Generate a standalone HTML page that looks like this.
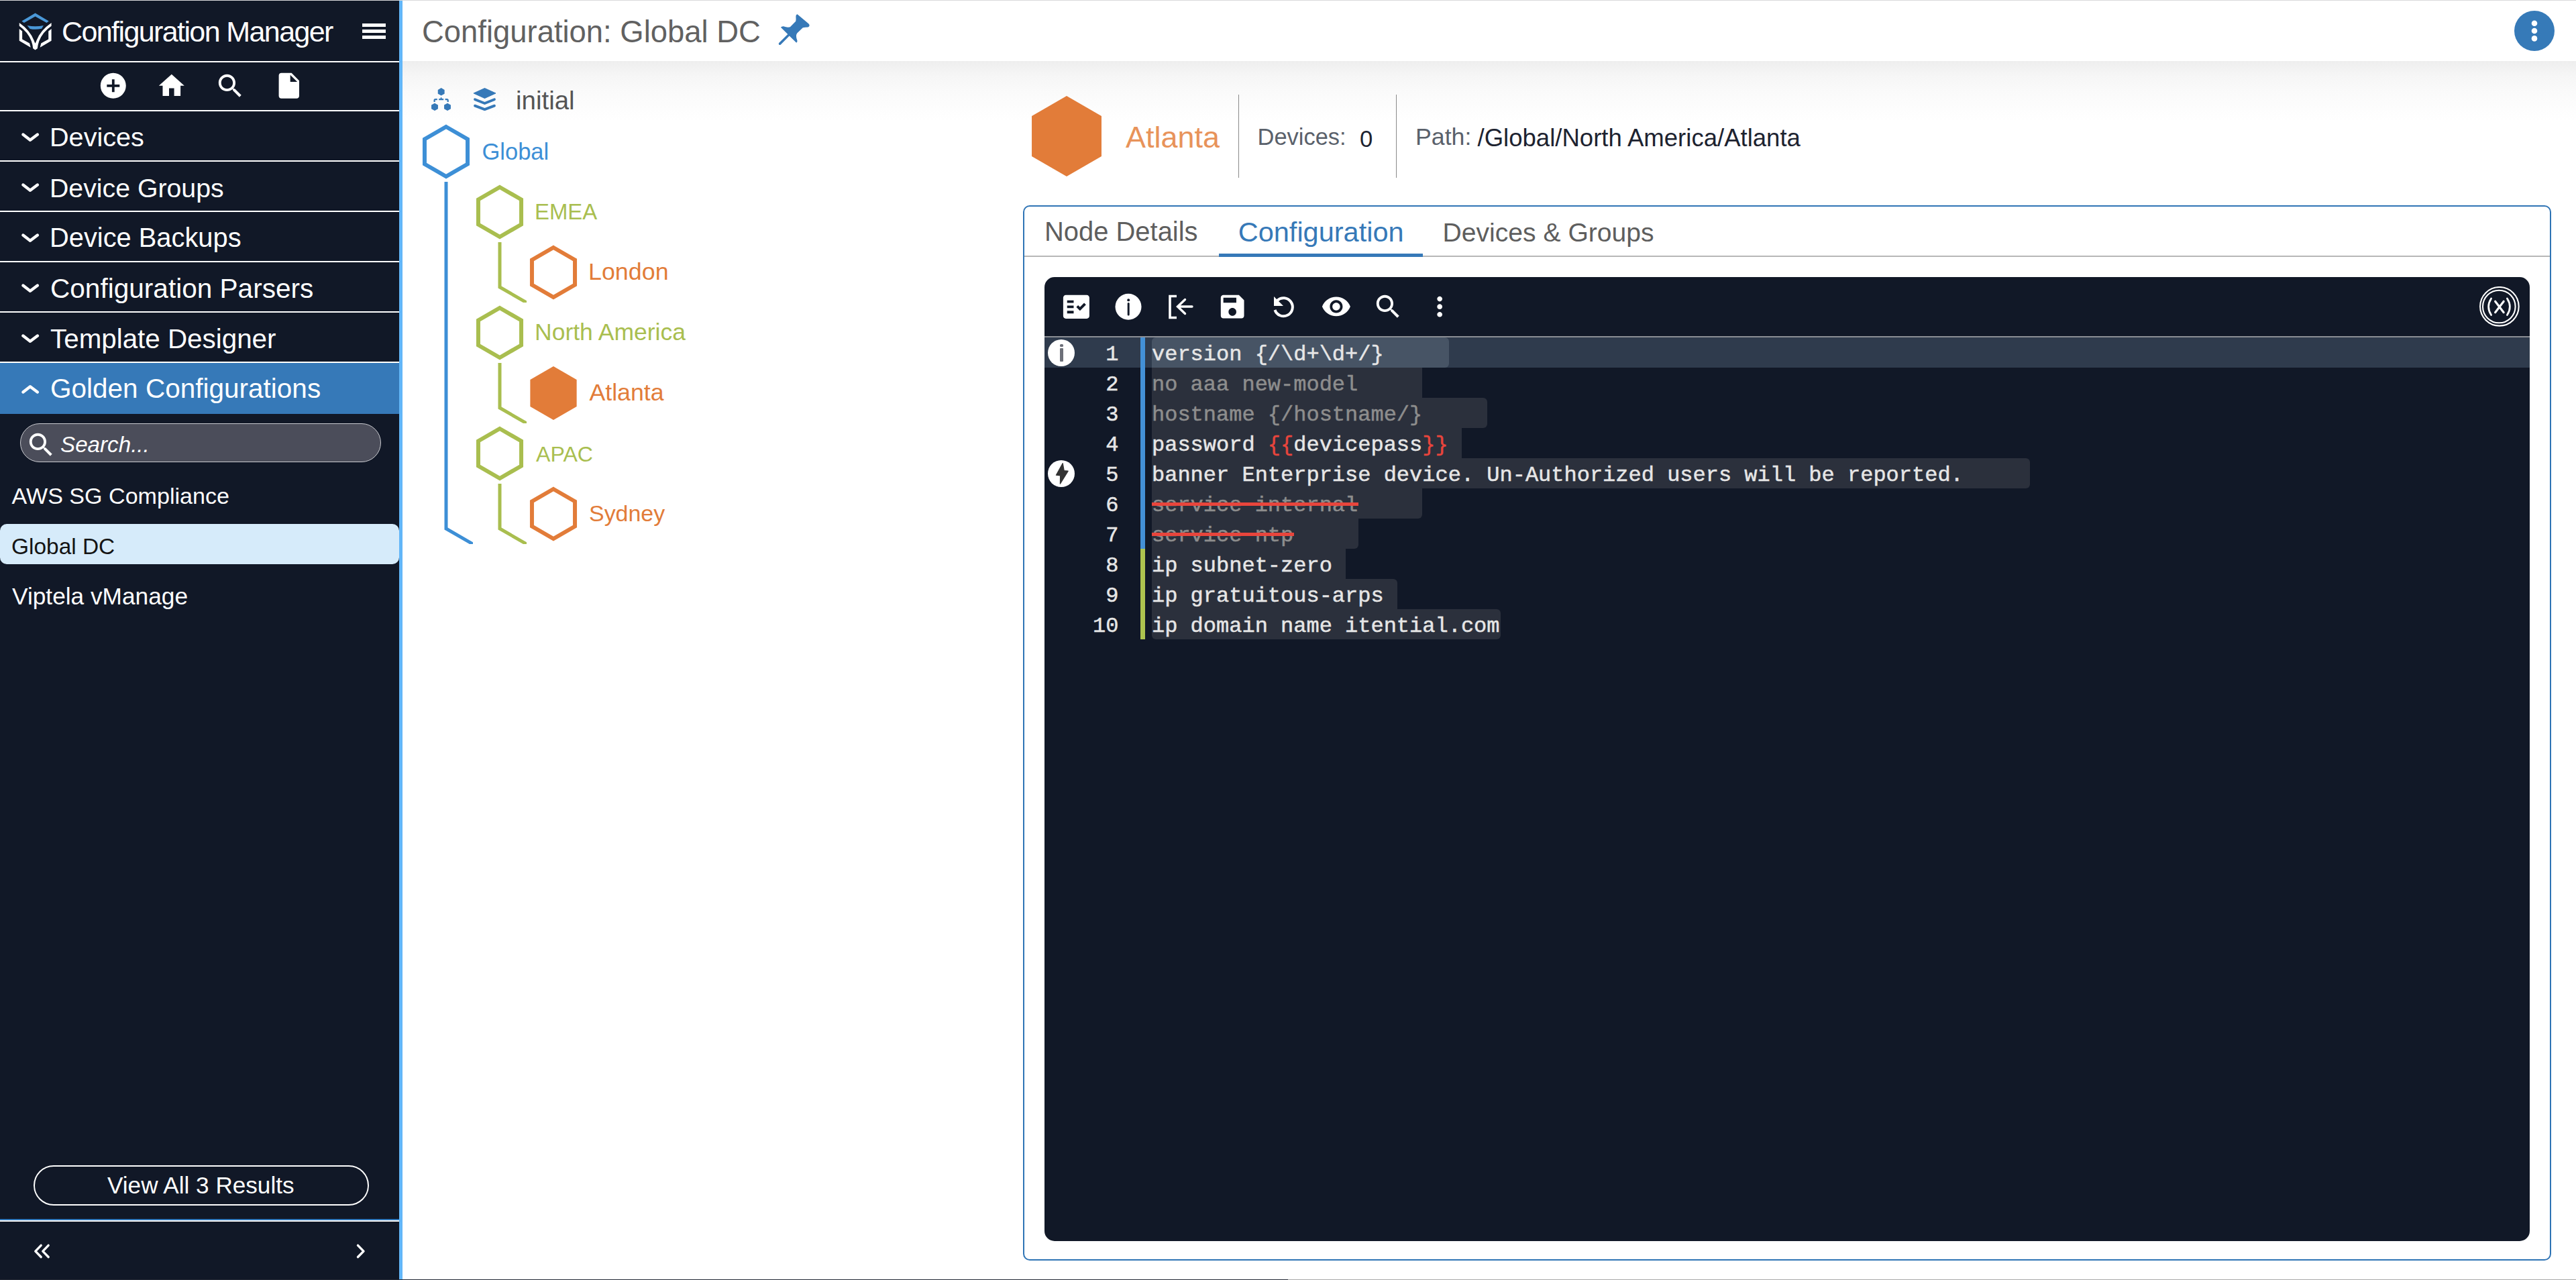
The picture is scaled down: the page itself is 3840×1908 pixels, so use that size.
<!DOCTYPE html>
<html><head><meta charset="utf-8"><style>
html,body{margin:0;padding:0;width:3840px;height:1908px;overflow:hidden;background:#fff;}
body{position:relative;font-family:'Liberation Sans', sans-serif;}
.t{position:absolute;white-space:nowrap;}
.r{position:absolute;}
</style></head><body>
<div class="r" style="left:0px;top:0px;width:3840px;height:1px;background:#d9d9db;"></div>
<div class="r" style="left:0px;top:1px;width:595px;height:1907px;background:#111827;"></div>
<div class="r" style="left:595px;top:1px;width:5px;height:1907px;background:#62b6f8;"></div>
<svg class="r" style="left:20px;top:12px;" width="70" height="70" viewBox="0 0 1280 1280">
<path d="M225 355 L595 135 L965 355 L905 400 L595 230 L290 400 Z" fill="#4a98d8"/>
<path d="M375 475 Q595 520 820 475 L770 560 Q595 600 450 565 Z" fill="#4a98d8"/>
<path d="M160 400 Q450 600 560 880 Q590 960 595 960 Q600 960 630 880 Q740 600 1035 400 L1035 490 Q800 650 700 900 Q660 1020 655 1100 L595 1145 L535 1100 Q530 1020 490 900 Q390 650 160 490 Z" fill="#fff"/>
<path d="M160 565 L240 630 L240 850 L440 960 L470 1075 L160 890 Z" fill="#fff"/>
<path d="M1035 565 L955 630 L955 850 L755 960 L725 1075 L1035 890 Z" fill="#fff"/>
</svg>
<div class="t" style="left:92px;top:25.89px;font-size:43px;line-height:43px;color:#fff;letter-spacing:-1.6px;">Configuration Manager</div>
<div class="r" style="left:540px;top:35px;width:35px;height:4.5px;background:#fff;"></div>
<div class="r" style="left:540px;top:44px;width:35px;height:4.5px;background:#fff;"></div>
<div class="r" style="left:540px;top:53px;width:35px;height:4.5px;background:#fff;"></div>
<div class="r" style="left:0px;top:91px;width:595px;height:2px;background:#fff;"></div>
<svg class="r" style="left:146.2px;top:105.2px;" width="45.6" height="45.6" viewBox="0 0 24 24"><path d="M12 2C6.48 2 2 6.48 2 12s4.48 10 10 10 10-4.48 10-10S17.52 2 12 2zm5 11h-4v4h-2v-4H7v-2h4V7h2v4h4v2z" fill="#fff" /></svg>
<svg class="r" style="left:233.2px;top:105.2px;" width="45.6" height="45.6" viewBox="0 0 24 24"><path d="M10 20v-6h4v6h5v-8h3L12 3 2 12h3v8z" fill="#fff" /></svg>
<svg class="r" style="left:320.3px;top:105.2px;" width="46.56" height="46.56" viewBox="0 0 24 24"><path d="M15.5 14h-.79l-.28-.27C15.41 12.59 16 11.11 16 9.5 16 5.91 13.09 3 9.5 3S3 5.91 3 9.5 5.91 16 9.5 16c1.61 0 3.09-.59 4.23-1.57l.27.28v.79l5 4.99L20.49 19l-4.99-5zm-6 0C7.01 14 5 11.99 5 9.5S7.01 5 9.5 5 14 7.01 14 9.5 11.99 14 9.5 14z" fill="#fff" /></svg>
<svg class="r" style="left:408.2px;top:105.2px;" width="45.6" height="45.6" viewBox="0 0 24 24"><path d="M6 2c-1.1 0-1.99.9-1.99 2L4 20c0 1.1.89 2 1.99 2H18c1.1 0 2-.9 2-2V8l-6-6H6zm7 7V3.5L18.5 9H13z" fill="#fff" /></svg>
<div class="r" style="left:0px;top:164px;width:595px;height:2px;background:#fff;"></div>
<div class="t" style="left:74px;top:185.45px;font-size:39.62px;line-height:39.62px;color:#fff;">Devices</div>
<svg class="r" style="left:30px;top:193px;" width="30" height="22" viewBox="0 0 30 22"><path d="M4.4 7.6 L15 15.75 L25.9 7.6" stroke="#fff" stroke-width="4.4" fill="none" stroke-linecap="round" stroke-linejoin="round"/></svg>
<div class="r" style="left:0px;top:239px;width:595px;height:2px;background:#fff;"></div>
<div class="t" style="left:74px;top:260.76px;font-size:39.26px;line-height:39.26px;color:#fff;">Device Groups</div>
<svg class="r" style="left:30px;top:268px;" width="30" height="22" viewBox="0 0 30 22"><path d="M4.4 7.6 L15 15.75 L25.9 7.6" stroke="#fff" stroke-width="4.4" fill="none" stroke-linecap="round" stroke-linejoin="round"/></svg>
<div class="r" style="left:0px;top:314px;width:595px;height:2px;background:#fff;"></div>
<div class="t" style="left:74px;top:335.27px;font-size:39.84px;line-height:39.84px;color:#fff;">Device Backups</div>
<svg class="r" style="left:30px;top:343px;" width="30" height="22" viewBox="0 0 30 22"><path d="M4.4 7.6 L15 15.75 L25.9 7.6" stroke="#fff" stroke-width="4.4" fill="none" stroke-linecap="round" stroke-linejoin="round"/></svg>
<div class="r" style="left:0px;top:389px;width:595px;height:2px;background:#fff;"></div>
<div class="t" style="left:75px;top:409.65px;font-size:40.57px;line-height:40.57px;color:#fff;">Configuration Parsers</div>
<svg class="r" style="left:30px;top:418px;" width="30" height="22" viewBox="0 0 30 22"><path d="M4.4 7.6 L15 15.75 L25.9 7.6" stroke="#fff" stroke-width="4.4" fill="none" stroke-linecap="round" stroke-linejoin="round"/></svg>
<div class="r" style="left:0px;top:464px;width:595px;height:2px;background:#fff;"></div>
<div class="t" style="left:75px;top:484.83px;font-size:40.36px;line-height:40.36px;color:#fff;">Template Designer</div>
<svg class="r" style="left:30px;top:493px;" width="30" height="22" viewBox="0 0 30 22"><path d="M4.4 7.6 L15 15.75 L25.9 7.6" stroke="#fff" stroke-width="4.4" fill="none" stroke-linecap="round" stroke-linejoin="round"/></svg>
<div class="r" style="left:0px;top:539px;width:595px;height:2px;background:#fff;"></div>
<div class="r" style="left:0px;top:541px;width:595px;height:76px;background:#3679b8;"></div>
<div class="t" style="left:75px;top:559.18px;font-size:40.53px;line-height:40.53px;color:#fff;">Golden Configurations</div>
<svg class="r" style="left:30px;top:568px;" width="30" height="22" viewBox="0 0 30 22"><path d="M4.4 16.4 L15 8.25 L25.9 16.4" stroke="#fff" stroke-width="4.4" fill="none" stroke-linecap="round" stroke-linejoin="round"/></svg>
<div class="r" style="left:30px;top:631px;width:536px;height:56px;border:1.5px solid #c9cacf;border-radius:32px;background:#4b4d5a"></div>
<svg class="r" style="left:37.5px;top:639.5px;" width="46.56" height="46.56" viewBox="0 0 24 24"><path d="M15.5 14h-.79l-.28-.27C15.41 12.59 16 11.11 16 9.5 16 5.91 13.09 3 9.5 3S3 5.91 3 9.5 5.91 16 9.5 16c1.61 0 3.09-.59 4.23-1.57l.27.28v.79l5 4.99L20.49 19l-4.99-5zm-6 0C7.01 14 5 11.99 5 9.5S7.01 5 9.5 5 14 7.01 14 9.5 11.99 14 9.5 14z" fill="#fff" /></svg>
<div class="t" style="left:90px;top:645.89px;font-size:33.2px;line-height:33.2px;color:#fff;font-style:italic;">Search...</div>
<div class="t" style="left:17.5px;top:721.64px;font-size:34.09px;line-height:34.09px;color:#fff;">AWS SG Compliance</div>
<div class="r" style="left:0px;top:781px;width:595px;height:60px;background:#d6ebfa;border-radius:10px;"></div>
<div class="t" style="left:17px;top:798.18px;font-size:33.45px;line-height:33.45px;color:#141414;">Global DC</div>
<div class="t" style="left:18px;top:871.13px;font-size:35.28px;line-height:35.28px;color:#fff;">Viptela vManage</div>
<div class="r" style="left:50px;top:1737px;width:496px;height:56px;border:2px solid #fff;border-radius:30px;"></div>
<div class="t" style="left:160px;top:1749.26px;font-size:35.13px;line-height:35.13px;color:#fff;">View All 3 Results</div>
<div class="r" style="left:0px;top:1817px;width:595px;height:2px;background:#3079bd;"></div>
<div class="r" style="left:0px;top:1819px;width:595px;height:2px;background:#fff;"></div>
<svg class="r" style="left:48px;top:1853px;" width="30" height="30" viewBox="0 0 30 30"><path d="M13.2 3.4 L4.8 12.1 L13.2 20.8 M24.2 3.4 L15.8 12.1 L24.2 20.8" stroke="#fff" stroke-width="3.4" fill="none" stroke-linecap="round" stroke-linejoin="round"/></svg>
<svg class="r" style="left:526px;top:1853px;" width="24" height="30" viewBox="0 0 24 30"><path d="M7.5 3.4 L16 12.1 L7.5 20.8" stroke="#fff" stroke-width="3.4" fill="none" stroke-linecap="round" stroke-linejoin="round"/></svg>
<div class="r" style="left:600px;top:91px;width:3240px;height:90px;background:linear-gradient(#eeeeee,#f6f6f6 25%,#fafafa 50%,#fdfdfd 80%,#fff)"></div>
<div class="t" style="left:629px;top:24.54px;font-size:45.42px;line-height:45.42px;color:#616161;">Configuration: Global DC</div>
<svg class="r" style="left:1150px;top:12px;" width="70" height="70" viewBox="0 0 70 70"><path d="M38.6 9.2 L55.3 23.3 Q58.3 26.6 54.6 28.6 Q50 28.8 46.8 29.2 L38.2 37.6 Q35.6 41.5 38.4 48.2 Q39.2 50.6 37.2 51.8 L26.7 41.5 L13.8 54.4 Q12.4 55.6 11.2 54.4 Q10 53 11.4 51.8 L24.3 39 L13.9 28.8 Q15.4 27 18 27.3 Q24 29.4 27.8 28.2 L36.2 19.8 Q36.8 17 36.4 13.6 Q36.2 9.6 38.6 9.2 Z" fill="#3679b8"/></svg>
<div class="r" style="left:3748px;top:16px;width:60px;height:60px;border-radius:50%;background:#367ab8"></div>
<svg class="r" style="left:3758px;top:26px;" width="40" height="40" viewBox="0 0 40 40"><circle cx="20" cy="8.8" r="4.3" fill="#fff"/><circle cx="20" cy="20" r="4.3" fill="#fff"/><circle cx="20" cy="31.4" r="4.3" fill="#fff"/></svg>
<svg class="r" style="left:636px;top:126px;" width="40" height="44" viewBox="0 0 40 44"><path d="M21.70,5.10 L26.64,7.95 L26.64,13.65 L21.70,16.50 L16.76,13.65 L16.76,7.95 Z M12.00,27.70 L16.94,30.55 L16.94,36.25 L12.00,39.10 L7.06,36.25 L7.06,30.55 Z M31.00,27.70 L35.94,30.55 L35.94,36.25 L31.00,39.10 L26.06,36.25 L26.06,30.55 Z" fill="#3679b8"/><path d="M11.600000000000023 26 V23.5 Q11.600000000000023 22.099999999999994 13 22.099999999999994 H15.799999999999955 M18.200000000000045 22.099999999999994 H25.200000000000045 M27.600000000000023 22.099999999999994 H30.299999999999955 Q31.700000000000045 22.099999999999994 31.700000000000045 23.5 V26" stroke="#3679b8" stroke-width="2.2" fill="none"/><path d="M21.600000000000023 18.599999999999994 L23.399999999999977 22 L19.799999999999955 22 Z" fill="#3679b8"/></svg>
<svg class="r" style="left:700px;top:126px;" width="44" height="44" viewBox="0 0 44 44"><path d="M22.5 5.5 L39 13 L22.5 20.5 L6 13 Z" fill="#3679b8" stroke="#3679b8" stroke-width="1" stroke-linejoin="round"/><path d="M8 22.30000000000001 L22.5 28 L37 22.30000000000001" stroke="#3679b8" stroke-width="3.8" fill="none" stroke-linecap="round" stroke-linejoin="round"/><path d="M8 31.599999999999994 L22.5 37.099999999999994 L37 31.599999999999994" stroke="#3679b8" stroke-width="3.8" fill="none" stroke-linecap="round" stroke-linejoin="round"/></svg>
<div class="t" style="left:769px;top:130.94px;font-size:38.45px;line-height:38.45px;color:#555;">initial</div>
<svg class="r" style="left:600px;top:160px;" width="500" height="700" viewBox="0 0 500 700"><path d="M65.00,29.00 L97.04,47.50 L97.04,84.50 L65.00,103.00 L32.96,84.50 L32.96,47.50 Z" fill="none" stroke="#3d8fd6" stroke-width="6"/><path d="M145.00,119.00 L177.04,137.50 L177.04,174.50 L145.00,193.00 L112.96,174.50 L112.96,137.50 Z" fill="none" stroke="#a9be4f" stroke-width="6"/><path d="M225.00,209.00 L257.04,227.50 L257.04,264.50 L225.00,283.00 L192.96,264.50 L192.96,227.50 Z" fill="none" stroke="#e27c39" stroke-width="6"/><path d="M145.00,299.00 L177.04,317.50 L177.04,354.50 L145.00,373.00 L112.96,354.50 L112.96,317.50 Z" fill="none" stroke="#a9be4f" stroke-width="6"/><path d="M225.00,386.00 L259.64,406.00 L259.64,446.00 L225.00,466.00 L190.36,446.00 L190.36,406.00 Z" fill="#e27c39"/><path d="M145.00,479.00 L177.04,497.50 L177.04,534.50 L145.00,553.00 L112.96,534.50 L112.96,497.50 Z" fill="none" stroke="#a9be4f" stroke-width="6"/><path d="M225.00,569.00 L257.04,587.50 L257.04,624.50 L225.00,643.00 L192.96,624.50 L192.96,587.50 Z" fill="none" stroke="#e27c39" stroke-width="6"/><clipPath id="c111"><rect x="55" y="111" width="50" height="540"/></clipPath><path d="M65 111 L65 628 L111 654.5" fill="none" stroke="#3d8fd6" stroke-width="5" stroke-linejoin="miter" clip-path="url(#c111)"/><clipPath id="c201"><rect x="135" y="201" width="50" height="90"/></clipPath><path d="M145 201 L145 268 L191 294.5" fill="none" stroke="#a9be4f" stroke-width="5" stroke-linejoin="miter" clip-path="url(#c201)"/><clipPath id="c381"><rect x="135" y="381" width="50" height="90"/></clipPath><path d="M145 381 L145 448 L191 474.5" fill="none" stroke="#a9be4f" stroke-width="5" stroke-linejoin="miter" clip-path="url(#c381)"/><clipPath id="c561"><rect x="135" y="561" width="50" height="90"/></clipPath><path d="M145 561 L145 628 L191 654.5" fill="none" stroke="#a9be4f" stroke-width="5" stroke-linejoin="miter" clip-path="url(#c561)"/></svg>
<div class="t" style="left:718.5px;top:208.79px;font-size:34.5px;line-height:34.5px;color:#3d8fd6;">Global</div>
<div class="t" style="left:797px;top:300.14px;font-size:32.91px;line-height:32.91px;color:#a9be4f;">EMEA</div>
<div class="t" style="left:877px;top:387.66px;font-size:35.83px;line-height:35.83px;color:#e27c39;">London</div>
<div class="t" style="left:797px;top:477.94px;font-size:35.5px;line-height:35.5px;color:#a9be4f;">North America</div>
<div class="t" style="left:878.4px;top:567.76px;font-size:35.72px;line-height:35.72px;color:#e27c39;">Atlanta</div>
<div class="t" style="left:799px;top:660.80px;font-size:32.12px;line-height:32.12px;color:#a9be4f;">APAC</div>
<div class="t" style="left:878px;top:749.26px;font-size:33.94px;line-height:33.94px;color:#e27c39;">Sydney</div>
<svg class="r" style="left:1530px;top:140px;" width="120" height="130" viewBox="0 0 120 130"><path d="M60.00,3.00 L111.96,33.00 L111.96,93.00 L60.00,123.00 L8.04,93.00 L8.04,33.00 Z" fill="#e27c39"/></svg>
<div class="t" style="left:1678px;top:182.92px;font-size:44.97px;line-height:44.97px;color:#e8935a;">Atlanta</div>
<div class="r" style="left:1846px;top:141px;width:1px;height:124px;background:#8a8a8a;"></div>
<div class="t" style="left:1874.6px;top:186.84px;font-size:34.44px;line-height:34.44px;color:#5a616b;">Devices:</div>
<div class="t" style="left:2027px;top:189.63px;font-size:34.69px;line-height:34.69px;color:#1d2330;">0</div>
<div class="r" style="left:2081px;top:141px;width:1px;height:124px;background:#8a8a8a;"></div>
<div class="t" style="left:2110px;top:186.75px;font-size:35.73px;line-height:35.73px;color:#5a616b;">Path:</div>
<div class="t" style="left:2202.5px;top:188.05px;font-size:36.55px;line-height:36.55px;color:#1d2330;">/Global/North America/Atlanta</div>
<div class="r" style="left:1525px;top:306px;width:2274px;height:1569px;border:2px solid #2f74b5;border-radius:10px;"></div>
<div class="t" style="left:1557px;top:326.18px;font-size:39.94px;line-height:39.94px;color:#5e5e5e;">Node Details</div>
<div class="t" style="left:1845.7px;top:324.85px;font-size:41.52px;line-height:41.52px;color:#3679b8;">Configuration</div>
<div class="t" style="left:2150.5px;top:326.88px;font-size:39.12px;line-height:39.12px;color:#5e5e5e;">Devices &amp; Groups</div>
<div class="r" style="left:1527px;top:381px;width:2274px;height:2px;background:#b7b7b7;"></div>
<div class="r" style="left:1817px;top:378px;width:304px;height:5px;background:#3679b8;"></div>
<div class="r" style="left:1557px;top:413px;width:2214px;height:1437px;background:#111827;border-radius:15px;overflow:hidden">
</div>
<div class="r" style="left:1557px;top:501px;width:2214px;height:2px;background:#8b8e94;"></div>
<svg class="r" style="left:1581.1px;top:434.2px;" width="46.8" height="46.8" viewBox="0 0 24 24"><path d="M20 3H4c-1.1 0-2 .9-2 2v14c0 1.1.9 2 2 2h16c1.1 0 2-.9 2-2V5c0-1.1-.9-2-2-2zM10 17H5v-2h5v2zm0-4H5v-2h5v2zm0-4H5V7h5v2zm4.82 6L12 12.16l1.41-1.41 1.41 1.42L17.99 9l1.42 1.42L14.82 15z" fill="#fff" /></svg>
<svg class="r" style="left:1658px;top:434px;" width="48" height="48" viewBox="0 0 48 48"><circle cx="24" cy="23.3" r="19.5" fill="#fff"/><circle cx="24.2" cy="13.2" r="2" fill="#111827"/><path d="M24.2 18.5 V35" stroke="#111827" stroke-width="3" stroke-linecap="round"/></svg>
<svg class="r" style="left:1735px;top:434px;" width="48" height="48" viewBox="0 0 48 48"><path d="M19 7.5 H9 V39.5 H19" stroke="#fff" stroke-width="3.6" fill="none"/><path d="M42 23 H21 M31.5 12.5 L20.5 23 L31.5 33.5" stroke="#fff" stroke-width="3.4" fill="none" stroke-linejoin="miter" stroke-linecap="round"/></svg>
<svg class="r" style="left:1813.8px;top:434.2px;" width="46.32" height="46.32" viewBox="0 0 24 24"><path d="M17 3H5c-1.11 0-2 .9-2 2v14c0 1.1.89 2 2 2h14c1.1 0 2-.9 2-2V7l-4-4zm-5 16c-1.66 0-3-1.34-3-3s1.34-3 3-3 3 1.34 3 3-1.34 3-3 3zm3-10H5V5h10v4z" fill="#fff" /></svg>
<svg class="r" style="left:1890px;top:434px;" width="48" height="48" viewBox="0 0 48 48"><path d="M10.5 28 A 13.5 13.5 0 1 0 14 14" stroke="#fff" stroke-width="4" fill="none"/><path d="M9 8 L9 22 L23 22 Z" fill="#fff"/></svg>
<svg class="r" style="left:1969px;top:434.4px;" width="45.84" height="45.84" viewBox="0 0 24 24"><path d="M12 4.5C7 4.5 2.73 7.61 1 12c1.73 4.39 6 7.5 11 7.5s9.27-3.11 11-7.5c-1.73-4.39-6-7.5-11-7.5zM12 17c-2.76 0-5-2.24-5-5s2.24-5 5-5 5 2.24 5 5-2.24 5-5 5zm0-8c-1.66 0-3 1.34-3 3s1.34 3 3 3 3-1.34 3-3-1.34-3-3-3z" fill="#fff" /></svg>
<svg class="r" style="left:2046.2px;top:434.2px;" width="46.56" height="46.56" viewBox="0 0 24 24"><path d="M15.5 14h-.79l-.28-.27C15.41 12.59 16 11.11 16 9.5 16 5.91 13.09 3 9.5 3S3 5.91 3 9.5 5.91 16 9.5 16c1.61 0 3.09-.59 4.23-1.57l.27.28v.79l5 4.99L20.49 19l-4.99-5zm-6 0C7.01 14 5 11.99 5 9.5S7.01 5 9.5 5 14 7.01 14 9.5 11.99 14 9.5 14z" fill="#fff" /></svg>
<svg class="r" style="left:2123.4px;top:434.3px;" width="46.32" height="46.32" viewBox="0 0 24 24"><path d="M12 8c1.1 0 2-.9 2-2s-.9-2-2-2-2 .9-2 2 .9 2 2 2zm0 2c-1.1 0-2 .9-2 2s.9 2 2 2 2-.9 2-2-.9-2-2-2zm0 6c-1.1 0-2 .9-2 2s.9 2 2 2 2-.9 2-2-.9-2-2-2z" fill="#fff" /></svg>
<svg class="r" style="left:3696px;top:427px;" width="60" height="60" viewBox="0 0 60 60"><circle cx="29.9" cy="29.8" r="28.8" stroke="#fff" stroke-width="2.1" fill="none"/><circle cx="29.3" cy="30" r="24.3" stroke="#fff" stroke-width="2.1" fill="none"/><path d="M17.6 18 Q9.6 30.3 17.6 42.6 M41.4 18 Q49.4 30.3 41.4 42.6" stroke="#fff" stroke-width="2.7" fill="none" stroke-linecap="round"/><path d="M23.6 22.2 L36.2 38.7 M36.2 22.2 L23.6 38.7" stroke="#fff" stroke-width="3.1" fill="none" stroke-linecap="round"/></svg>
<div class="r" style="left:1557px;top:503px;width:2214px;height:45px;background:#2f3b4d;"></div>
<div class="r" style="left:1717px;top:503px;width:443px;height:45px;background:#475465;border-radius:6px 6px 6px 0;"></div>
<div class="r" style="left:1717px;top:548px;width:403px;height:45px;background:#2b303c;border-radius:0px 0px 0px 0px;"></div>
<div class="r" style="left:1717px;top:593px;width:500px;height:45px;background:#2b303c;border-radius:0px 6px 6px 0px;"></div>
<div class="r" style="left:1717px;top:638px;width:462px;height:45px;background:#2b303c;border-radius:0px 0px 0px 0px;"></div>
<div class="r" style="left:1717px;top:683px;width:1309px;height:45px;background:#2b303c;border-radius:0px 6px 6px 0px;"></div>
<div class="r" style="left:1717px;top:728px;width:403px;height:45px;background:#2b303c;border-radius:0px 0px 6px 0px;"></div>
<div class="r" style="left:1717px;top:773px;width:308px;height:45px;background:#2b303c;border-radius:0px 0px 6px 0px;"></div>
<div class="r" style="left:1717px;top:818px;width:289px;height:45px;background:#2b303c;border-radius:0px 0px 0px 0px;"></div>
<div class="r" style="left:1717px;top:863px;width:366px;height:45px;background:#2b303c;border-radius:0px 6px 0px 0px;"></div>
<div class="r" style="left:1717px;top:908px;width:520px;height:45px;background:#2b303c;border-radius:0px 6px 6px 6px;"></div>
<div class="r" style="left:1700px;top:503px;width:7px;height:315px;background:#4390d6;"></div>
<div class="r" style="left:1700px;top:818px;width:7px;height:135px;background:#adc34f;"></div>
<div class="t" style="left:1717px;top:513.48px;font-size:32px;line-height:32px;color:#e6e6e6;font-family:'Liberation Mono', monospace;white-space:pre;"><span style="color:#e6e6e6;-webkit-text-stroke:0.5px #e6e6e6">version {/\d+\d+/}</span></div>
<div class="t" style="left:1648.3px;top:513.48px;font-size:32px;line-height:32px;color:#e6e6e6;font-family:'Liberation Mono', monospace;-webkit-text-stroke:0.5px #e6e6e6;">1</div>
<div class="t" style="left:1717px;top:558.48px;font-size:32px;line-height:32px;color:#e6e6e6;font-family:'Liberation Mono', monospace;white-space:pre;"><span style="color:#8d8d8d;-webkit-text-stroke:0.5px #8d8d8d">no aaa new-model</span></div>
<div class="t" style="left:1648.3px;top:558.48px;font-size:32px;line-height:32px;color:#e6e6e6;font-family:'Liberation Mono', monospace;-webkit-text-stroke:0.5px #e6e6e6;">2</div>
<div class="t" style="left:1717px;top:603.48px;font-size:32px;line-height:32px;color:#e6e6e6;font-family:'Liberation Mono', monospace;white-space:pre;"><span style="color:#8d8d8d;-webkit-text-stroke:0.5px #8d8d8d">hostname {/hostname/}</span></div>
<div class="t" style="left:1648.3px;top:603.48px;font-size:32px;line-height:32px;color:#e6e6e6;font-family:'Liberation Mono', monospace;-webkit-text-stroke:0.5px #e6e6e6;">3</div>
<div class="t" style="left:1717px;top:648.48px;font-size:32px;line-height:32px;color:#e6e6e6;font-family:'Liberation Mono', monospace;white-space:pre;"><span style="color:#e6e6e6;-webkit-text-stroke:0.5px #e6e6e6">password </span><span style="color:#e8453c;-webkit-text-stroke:0.5px #e8453c">{{</span><span style="color:#e6e6e6;-webkit-text-stroke:0.5px #e6e6e6">devicepass</span><span style="color:#e8453c;-webkit-text-stroke:0.5px #e8453c">}}</span></div>
<div class="t" style="left:1648.3px;top:648.48px;font-size:32px;line-height:32px;color:#e6e6e6;font-family:'Liberation Mono', monospace;-webkit-text-stroke:0.5px #e6e6e6;">4</div>
<div class="t" style="left:1717px;top:693.48px;font-size:32px;line-height:32px;color:#e6e6e6;font-family:'Liberation Mono', monospace;white-space:pre;"><span style="color:#e6e6e6;-webkit-text-stroke:0.5px #e6e6e6">banner Enterprise device. Un-Authorized users will be reported.</span></div>
<div class="t" style="left:1648.3px;top:693.48px;font-size:32px;line-height:32px;color:#e6e6e6;font-family:'Liberation Mono', monospace;-webkit-text-stroke:0.5px #e6e6e6;">5</div>
<div class="t" style="left:1717px;top:738.48px;font-size:32px;line-height:32px;color:#e6e6e6;font-family:'Liberation Mono', monospace;white-space:pre;"><span style="color:#8d8d8d;-webkit-text-stroke:0.5px #8d8d8d">service internal</span></div>
<div class="t" style="left:1648.3px;top:738.48px;font-size:32px;line-height:32px;color:#e6e6e6;font-family:'Liberation Mono', monospace;-webkit-text-stroke:0.5px #e6e6e6;">6</div>
<div class="t" style="left:1717px;top:783.48px;font-size:32px;line-height:32px;color:#e6e6e6;font-family:'Liberation Mono', monospace;white-space:pre;"><span style="color:#8d8d8d;-webkit-text-stroke:0.5px #8d8d8d">service ntp</span></div>
<div class="t" style="left:1648.3px;top:783.48px;font-size:32px;line-height:32px;color:#e6e6e6;font-family:'Liberation Mono', monospace;-webkit-text-stroke:0.5px #e6e6e6;">7</div>
<div class="t" style="left:1717px;top:828.48px;font-size:32px;line-height:32px;color:#e6e6e6;font-family:'Liberation Mono', monospace;white-space:pre;"><span style="color:#e6e6e6;-webkit-text-stroke:0.5px #e6e6e6">ip subnet-zero</span></div>
<div class="t" style="left:1648.3px;top:828.48px;font-size:32px;line-height:32px;color:#e6e6e6;font-family:'Liberation Mono', monospace;-webkit-text-stroke:0.5px #e6e6e6;">8</div>
<div class="t" style="left:1717px;top:873.48px;font-size:32px;line-height:32px;color:#e6e6e6;font-family:'Liberation Mono', monospace;white-space:pre;"><span style="color:#e6e6e6;-webkit-text-stroke:0.5px #e6e6e6">ip gratuitous-arps</span></div>
<div class="t" style="left:1648.3px;top:873.48px;font-size:32px;line-height:32px;color:#e6e6e6;font-family:'Liberation Mono', monospace;-webkit-text-stroke:0.5px #e6e6e6;">9</div>
<div class="t" style="left:1717px;top:918.48px;font-size:32px;line-height:32px;color:#e6e6e6;font-family:'Liberation Mono', monospace;white-space:pre;"><span style="color:#e6e6e6;-webkit-text-stroke:0.5px #e6e6e6">ip domain name itential.com</span></div>
<div class="t" style="left:1629.1px;top:918.48px;font-size:32px;line-height:32px;color:#e6e6e6;font-family:'Liberation Mono', monospace;-webkit-text-stroke:0.5px #e6e6e6;">10</div>
<div class="r" style="left:1717px;top:749px;width:308px;height:5px;background:#e8453c;"></div>
<div class="r" style="left:1717px;top:794px;width:212px;height:5px;background:#e8453c;"></div>
<div class="r" style="left:1562px;top:506px;width:40px;height:40px;border-radius:50%;background:#fff"></div>
<div class="r" style="left:1579.5px;top:513px;width:5px;height:3.5px;background:#6d7079;border-radius:1.5px;"></div>
<div class="r" style="left:1579.5px;top:518.5px;width:5px;height:20px;background:#6d7079;border-radius:1px;"></div>
<div class="r" style="left:1562px;top:686px;width:40px;height:40px;border-radius:50%;background:#fff"></div>
<svg class="r" style="left:1562px;top:686px;" width="40" height="40" viewBox="0 0 40 40"><path d="M22.2 4.6 L12.4 22.2 L18.6 22.8 L18.4 35.2 L30.2 16.2 L24.2 15.6 Z" fill="#333" stroke="#333" stroke-width="1.2" stroke-linejoin="round"/></svg>
<div class="r" style="left:0px;top:1907px;width:1920px;height:1px;background:#242935;"></div>
<div class="r" style="left:1920px;top:1907px;width:1920px;height:1px;background:#a8a8a8;"></div>
</body></html>
